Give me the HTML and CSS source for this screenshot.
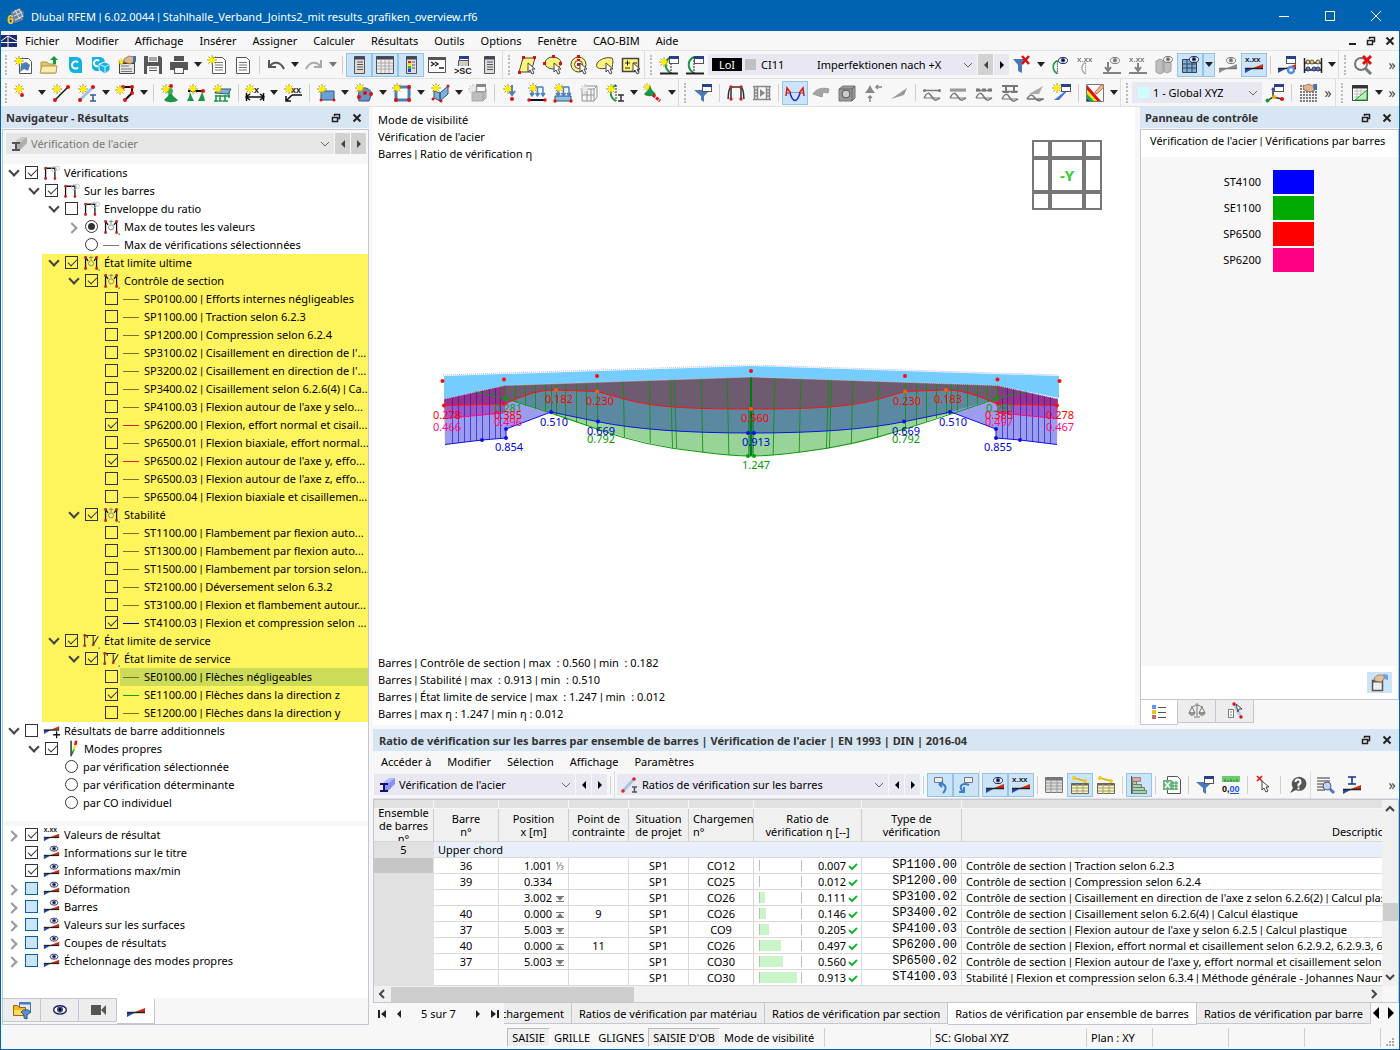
FILE: index.html
```html
<!DOCTYPE html>
<html lang="fr">
<head>
<meta charset="UTF-8">
<title>Dlubal RFEM</title>
<link rel="stylesheet" href="styles.css">
</head>
<body>

<!-- icons -->
<svg class="defs">
  <defs>
    <g id="star"><path d="M5 0v10M0 5h10M1.5 1.5l7 7M8.5 1.5l-7 7" stroke="#b99a00" fill="none"/><circle cx="5" cy="5" r="2.8" fill="#ffee00"/></g>
    <g id="eye"><ellipse cx="5" cy="3.5" rx="4.5" ry="3" fill="#fff" stroke="#1c2050"/><circle cx="5" cy="3.3" r="2.2" fill="#3a4f9a"/><circle cx="5" cy="3.3" r="1" fill="#000"/></g>
    <g id="win"><rect x=".5" y=".5" width="9" height="7" fill="#fff" stroke="#555"/><path d="M0 1.5h10" stroke="#2b3f8c" stroke-width="3"/></g>
    <g id="doc"><path d="M.5.5h10l3 3v13H.5z" fill="#fff" stroke="#555"/><path d="M3 5.5h8M3 8h8M3 10.5h8M3 13h8" stroke="#777"/></g>
    <g id="ramp"><path d="M0 9V4h9z" fill="#2449b0"/><path d="M8 4L18 0v4z" fill="#d42a10"/><path d="M0 4.5h18" stroke="#222" stroke-width="1.5"/></g>
    <g id="cur"><path d="M0 0v9l2-2 2 4 2-1-2-4h3z" fill="#fff" stroke="#444"/></g>
    <g id="wave"><path d="M1 4.5h16M1 12c3-6 5-6 8-1s5 3 8 1" fill="none" stroke="#777" stroke-width="1.5"/><path d="M1 12h16" stroke="#777"/></g>
    <g id="arc"><path d="M8 1C1 4 1 13 8 17" fill="none" stroke="#1b9a45" stroke-width="2"/><path d="M8 1v16" stroke="#222" stroke-dasharray="2 1"/></g>
  </defs>
  <symbol id="i-app" viewBox="0 0 20 20"><path d="M5 6l8-4 5 4-1 8-8 3-4-5z" fill="#6f8396"/><path d="M7 7l7-4M8 10l8-4M9 14l8-4M9 4l5 9M13 3l4 8" stroke="#dbe6ee"/><text x="1" y="18" class="six">6</text></symbol>
  <symbol id="i-rfem" viewBox="0 0 16 12"><path d="M0 0h16v12H0z" fill="#1d2b6f"/><path d="M0 6l7-5 9 5M0 7.5h16M7 1v11" fill="none" stroke="#fff"/></symbol>
  <symbol id="i-drop" viewBox="0 0 8 5"><path d="M0 0h8L4 5z" fill="#222"/></symbol>
  <symbol id="i-chev" viewBox="0 0 10 10"><path d="M1 3l4 4 4-4" fill="none" stroke="#666"/></symbol>
  <symbol id="i-prev" viewBox="0 0 10 10"><path d="M7 1v8L3 5z"/></symbol>
  <symbol id="i-next" viewBox="0 0 10 10"><path d="M3 1v8l4-4z"/></symbol>
  <symbol id="i-float" viewBox="0 0 10 10"><path d="M3.5 3V1.5h5v4H7M1.5 4.5h5v4h-5zM3 1.5h6M1 4.5h6" fill="none" stroke="#222" stroke-width="1.5"/></symbol>
  <symbol id="i-x" viewBox="0 0 10 10"><path d="M1.5 1.5l7 7M8.5 1.5l-7 7" stroke="#222" stroke-width="2"/></symbol>
  <symbol id="i-new" viewBox="0 0 20 20"><path d="M6.5 3.5h9l3 3v12h-12z" fill="#fff" stroke="#555"/><path d="M8 9l5-2 4 3-2 6-4-2-4 3z" fill="#4a7fb8"/><use href="#star" x="1" y="1"/></symbol>
  <symbol id="i-open" viewBox="0 0 20 20"><path d="M2 7h6l2 2h6v9H2z" fill="#dcc766" stroke="#b3964a"/><path d="M1 18l2-7h15l-1 7z" fill="#f8ecae" stroke="#b3964a"/><path d="M14 9V5h-3l4-4 4 4h-2v4z" fill="#149a3c"/></symbol>
  <symbol id="i-c" viewBox="0 0 20 20"><path d="M4 2h8a6 6 0 0 1 5 5v11H9a6 6 0 0 1-5-5z" fill="#11b2e2"/><path d="M13 7.5a3.5 3.5 0 1 0 0 5" fill="none" stroke="#fff" stroke-width="2"/></symbol>
  <symbol id="i-cc" viewBox="0 0 20 20"><path d="M1 2h8a6 6 0 0 1 5 5v9H5a5 5 0 0 1-4-4z" fill="#11b2e2"/><path d="M8 6a3 3 0 1 0-1 5" fill="none" stroke="#fff" stroke-width="2"/><path d="M14 7l5 2v6l-5 4-6-4V9z" fill="#11b2e2" stroke="#f7f7f7"/><path d="M8 9l6 3 5-3M14 12v7" stroke="#d8f4fc" fill="none"/></symbol>
  <symbol id="i-hand" viewBox="0 0 20 20"><path d="M2.5 6.5h15v12h-15z" fill="#e6e6e6" stroke="#444"/><path d="M3 8h14" stroke="#444" stroke-width="2"/><path d="M4 11h8M4 14h11M4 16.5h11" stroke="#777"/><path d="M7 4l5-3 5 1v5l-4 2-6-2z" fill="#e2b48c" stroke="#8a5a3a" stroke-width=".7"/><path d="M16 1h3v6h-3z" fill="#3f74b4"/><use href="#star" transform="scale(.7)" x="1" y="5"/></symbol>
  <symbol id="i-save" viewBox="0 0 20 20"><path d="M1 1h16l2 2v16H1z" fill="#565656"/><path d="M5 1h10v6H5zM4 11h12v8H4z" fill="#f7f7f7"/><path d="M6 3h8M6 5h8M6 13h8M6 15.5h8" stroke="#565656"/></symbol>
  <symbol id="i-print" viewBox="0 0 20 20"><path d="M5 1h10v5H5zM1 7h18v8H1zM5 12h10v7H5z" fill="#565656"/><path d="M6.5 13.5h7v4h-7zM4 6.5h12" fill="#f7f7f7" stroke="#f7f7f7"/></symbol>
  <symbol id="i-ndoc" viewBox="0 0 20 20"><use href="#doc" x="5" y="2"/><use href="#star"/></symbol>
  <symbol id="i-doc" viewBox="0 0 20 20"><use href="#doc" x="3" y="2"/></symbol>
  <symbol id="i-undo" viewBox="0 0 20 20"><path d="M3 5v7h7M3 12c4-6 11-6 15 2" fill="none" stroke="#555" stroke-width="2"/></symbol>
  <symbol id="i-redo" viewBox="0 0 20 20"><path d="M17 5v7h-7M17 12c-4-6-11-6-15 2" fill="none" stroke="#aaa" stroke-width="2"/></symbol>
  <symbol id="i-nav" viewBox="0 0 20 20"><path d="M5.5 1.5h10v17h-10z" fill="#ddd" stroke="#555"/><path d="M5 3h11" stroke="#445" stroke-width="3"/><path d="M8 7h6M8 9.5h6M8 12h6M8 14.5h6" stroke="#555"/></symbol>
  <symbol id="i-grid" viewBox="0 0 20 20"><path d="M1.5 1.5h17v17h-17z" fill="#eee" stroke="#555"/><path d="M1 3h18" stroke="#445" stroke-width="3"/><path d="M2 8h16M2 11h16M2 14h16M6 5v13M10 5v13M14 5v13" stroke="#aaa"/></symbol>
  <symbol id="i-scale" viewBox="0 0 20 20"><path d="M5.5 1.5h10v17h-10z" fill="#ddd" stroke="#555"/><path d="M5 3h11" stroke="#445" stroke-width="3"/><path d="M7 6h3v2H7z" fill="#d22"/><path d="M7 8h3v3H7z" fill="#fd0"/><path d="M7 11h3v3H7z" fill="#2b3"/><path d="M7 14h3v3H7z" fill="#24d"/><path d="M11 7h3M11 10h3M11 13h3" stroke="#555"/></symbol>
  <symbol id="i-cons" viewBox="0 0 20 20"><path d="M1.5 2.5h17v15h-17z" fill="#fff" stroke="#555"/><path d="M1 3.5h18" stroke="#555" stroke-width="3"/><path d="M4 7l3 2-3 2M8 7l3 2-3 2M12 13h5" fill="none" stroke="#222" stroke-width="1.5"/></symbol>
  <symbol id="i-sc" viewBox="0 0 20 20"><use href="#win" x="6" y="1"/><path d="M5.5 5.5h10v6h-10z" fill="#ccc" stroke="#555"/><path d="M0 11h20v8H0z" fill="#f7f7f7"/><text x="1" y="19" class="tiny big">&gt;SC</text></symbol>
  <symbol id="i-poly" viewBox="0 0 20 20"><path d="M2 17L6 3h12l-4 14z" fill="#fff37a" stroke="#444"/><path d="M1 16h3v3H1zM5 1h3v3H5zM16 1h3v3h-3z" fill="#d11"/><use href="#cur" x="11" y="8"/></symbol>
  <symbol id="i-ell" viewBox="0 0 20 20"><ellipse cx="10" cy="8" rx="8" ry="6" fill="#fff37a" stroke="#444"/><path d="M9 0h3v3H9zM0 7h3v3H0zM16 7h3v3h-3z" fill="#d11"/><use href="#cur" x="11" y="8"/></symbol>
  <symbol id="i-ring" viewBox="0 0 20 20"><circle cx="9.500" cy="9.500" r="7.500" fill="#fff37a" stroke="#444"/><circle cx="9.500" cy="9.500" r="4" fill="#fff" stroke="#444"/><path d="M8 0h3v3H8zM8 8h3v3H8zM8 4h3v2H8z" fill="#d11"/><use href="#cur" x="11" y="8"/></symbol>
  <symbol id="i-lasso" viewBox="0 0 20 20"><path d="M3 7c4-4 10-5 14-4 2 3 0 7 0 11l-5-1c-4 1-9 1-10-1-1-2 0-4 1-5z" fill="#fff37a" stroke="#444"/><use href="#cur" x="11" y="8"/></symbol>
  <symbol id="i-pm" viewBox="0 0 20 20"><path d="M1.5 3.5h16v13h-16z" fill="#fff37a" stroke="#444" stroke-width="1.5"/><path d="M4 8h5M6.5 5.5v5M4 13h5M12 8h4" stroke="#222"/><use href="#cur" x="12" y="8"/></symbol>
  <symbol id="i-lc" viewBox="0 0 20 20"><use href="#arc" x="4" y="1"/><use href="#win" x="10" y="1"/><path d="M1 18.5h18" stroke="#222" stroke-width="2"/><use href="#star" x="0" y="2"/></symbol>
  <symbol id="i-lc2" viewBox="0 0 20 20"><use href="#arc" x="1" y="1"/><use href="#win" x="9" y="1"/><path d="M1 18.5h18" stroke="#222" stroke-width="2"/></symbol>
  <symbol id="i-fx" viewBox="0 0 20 20"><path d="M1 4h14l-5 6v8l-4-2v-6z" fill="#4a78b8"/><path d="M10 1l7 8M17 1l-7 8" stroke="#e01010" stroke-width="2.5"/></symbol>
  <symbol id="i-arceye" viewBox="0 0 20 20"><use href="#arc" transform="translate(1 5) scale(.8)"/><use href="#eye" x="8" y="2"/></symbol>
  <symbol id="i-arcx" viewBox="0 0 20 20"><use href="#arc" transform="translate(4 7) scale(.7)"/><text x="1" y="7" class="tiny">x.xx</text></symbol>
  <symbol id="i-loadeye" viewBox="0 0 20 20"><path d="M1 18h18" stroke="#333" stroke-width="2"/><path d="M6 7v8M3 12l3 4 3-4" fill="none" stroke="#333" stroke-width="2"/><use href="#eye" x="8" y="2"/></symbol>
  <symbol id="i-loadx" viewBox="0 0 20 20"><path d="M1 18h18" stroke="#333" stroke-width="2"/><path d="M10 8v8M7 12l3 4 3-4" fill="none" stroke="#333" stroke-width="2"/><text x="1" y="7" class="tiny">x.xx</text></symbol>
  <symbol id="i-cube" viewBox="0 0 20 20"><path d="M2 6l4-2 4 2v11l-4 2-4-2zM9 5l4-2 4 2v11l-4 2-4-2z" fill="#999" stroke="#666"/><use href="#eye" x="9" y="1"/></symbol>
  <symbol id="i-mesh" viewBox="0 0 20 20"><path d="M2.5 4.5h14v13h-14z" fill="#7fadd8" stroke="#345"/><path d="M2 9h14M2 13h14M7 4v14M12 4v14" stroke="#345"/><use href="#eye" x="9" y="1"/></symbol>
  <symbol id="i-reye" viewBox="0 0 20 20"><use href="#ramp" x="1" y="9"/><use href="#eye" x="8" y="2"/></symbol>
  <symbol id="i-rx" viewBox="0 0 20 20"><use href="#ramp" x="1" y="9"/><text x="1" y="7" class="tiny">x.xx</text></symbol>
  <symbol id="i-rwin" viewBox="0 0 20 20"><use href="#ramp" x="1" y="9"/><use href="#win" x="9" y="1"/><circle cx="14" cy="15" r="3" fill="#fff" stroke="#5a8de0" stroke-width="2.5"/></symbol>
  <symbol id="i-abac" viewBox="0 0 20 20"><path d="M1.5 3v15M18.5 3v15M1 8h18M1 15h18" stroke="#222" stroke-width="1.5"/><g fill="#e8d46a" stroke="#555"><circle cx="5" cy="7" r="2"/><circle cx="9" cy="7" r="2"/><circle cx="15" cy="7" r="2"/></g><g fill="#5b7fd0" stroke="#335"><circle cx="5" cy="14" r="2"/><circle cx="11" cy="14" r="2"/><circle cx="15" cy="14" r="2"/></g></symbol>
  <symbol id="i-find" viewBox="0 0 20 20"><circle cx="8" cy="9" r="6" fill="none" stroke="#777" stroke-width="2"/><path d="M12 13l6 6" stroke="#777" stroke-width="3"/><path d="M10 1l8 8M18 1l-8 8" stroke="#e01010" stroke-width="3"/></symbol>
  <symbol id="i-node" viewBox="0 0 20 20"><use href="#star" x="1" y="1"/><circle cx="9" cy="12" r="2" fill="#e01010"/></symbol>
  <symbol id="i-line" viewBox="0 0 20 20"><path d="M4 17L17 4" stroke="#111" stroke-width="1.5"/><circle cx="4" cy="17" r="2" fill="#e01010"/><circle cx="17" cy="4" r="2" fill="#e01010"/><use href="#star" x="1" y="1"/></symbol>
  <symbol id="i-member" viewBox="0 0 20 20"><path d="M3 17L16 4" stroke="#9cc3e8" stroke-width="3"/><circle cx="3" cy="17" r="2" fill="#e01010"/><circle cx="16" cy="4" r="2" fill="#e01010"/><path d="M13 12h6M13 18h6M16 12v6" stroke="#3a5a90" stroke-width="1.5"/><use href="#star" x="1" y="1"/></symbol>
  <symbol id="i-mem" viewBox="0 0 20 20"><path d="M3 16L14 4" stroke="#a8c4e0" stroke-width="3"/><circle cx="3" cy="16" r="1.8" fill="#d22"/><circle cx="14" cy="4" r="1.8" fill="#d22"/><path d="M12 12h5M12 17h5M14.5 12v5" stroke="#555" stroke-width="1.5"/></symbol>
  <symbol id="i-pline" viewBox="0 0 20 20"><path d="M8 4h9v6l-7 7" fill="none" stroke="#111" stroke-width="2"/><g fill="#e01010"><circle cx="8" cy="4" r="2"/><circle cx="17" cy="4" r="2"/><circle cx="17" cy="10" r="2"/><circle cx="10" cy="17" r="2"/></g><use href="#star" x="0" y="2"/></symbol>
  <symbol id="i-sup" viewBox="0 0 20 20"><path d="M10 6l3 7 5 4c-3 3-11 3-14 0l4-4z" fill="#1d9446"/><circle cx="10" cy="8" r="3" fill="#35b05e"/><circle cx="11" cy="3" r="2" fill="#e01010"/><use href="#star" x="1" y="1"/></symbol>
  <symbol id="i-sup2" viewBox="0 0 20 20"><path d="M2 8h16" stroke="#111" stroke-width="2"/><path d="M4 9l2 5 2 4H1l2-4zM16 9l2 5 1 4h-7l2-4z" fill="#1d9446"/><circle cx="17" cy="8" r="2" fill="#e01010"/><use href="#star" x="2" y="1"/></symbol>
  <symbol id="i-sup3" viewBox="0 0 20 20"><path d="M3 10l3-4h13l-3 5z" fill="#7db0de" stroke="#357"/><path d="M4 12v6M8 12v6M13 12v6M17 9v6M2 18h4M6.5 18h4M11 18h5M3 13h15" stroke="#1d9446" stroke-width="1.5"/><use href="#star" x="1" y="1"/></symbol>
  <symbol id="i-dim" viewBox="0 0 20 20"><path d="M1.5 10v8M18.5 10v8M2 14h16M5 11l-4 3 4 3M15 11l4 3-4 3" fill="none" stroke="#111" stroke-width="1.5"/><text x="9" y="10" class="tiny big">x</text><use href="#star" x="0" y="1"/></symbol>
  <symbol id="i-dimx" viewBox="0 0 20 20"><path d="M9 12h10M9 12l-6 6M3 13v5h5" fill="none" stroke="#111" stroke-width="1.5"/><text x="8" y="10" class="tiny big">xx</text><use href="#star" x="1" y="1"/></symbol>
  <symbol id="i-surf" viewBox="0 0 20 20"><path d="M5 8h13v9H5z" fill="#6aa0d8" stroke="#357"/><circle cx="5" cy="17" r="1.5" fill="#e01010"/><circle cx="18" cy="17" r="1.5" fill="#e01010"/><use href="#star" x="1" y="1"/></symbol>
  <symbol id="i-surf2" viewBox="0 0 20 20"><path d="M5 7c5-4 10-2 13 3l-3 8H5c-2-4 0-7 0-11z" fill="#6a8fc0" stroke="#357"/><circle cx="5" cy="14" r="2" fill="#e01010"/><circle cx="11" cy="10" r="2" fill="#e01010"/><circle cx="17" cy="11" r="2" fill="#e01010"/><use href="#star" x="1" y="0"/></symbol>
  <symbol id="i-open2" viewBox="0 0 20 20"><path d="M4 4h13v13H4z" fill="#fff" stroke="#4680bb" stroke-width="3"/><circle cx="4" cy="17" r="2" fill="#e01010"/><circle cx="17" cy="17" r="2" fill="#e01010"/><circle cx="17" cy="4" r="2" fill="#e01010"/><use href="#star" x="0" y="0"/></symbol>
  <symbol id="i-solid" viewBox="0 0 20 20"><path d="M4 8l6 2v8l-6-3zM10 10l8-7v8l-8 7z" fill="#7db0de" stroke="#357"/><circle cx="3" cy="16" r="1.5" fill="#e01010"/><circle cx="11" cy="18" r="1.5" fill="#e01010"/><circle cx="18" cy="3" r="1.5" fill="#e01010"/><use href="#star" x="1" y="0"/></symbol>
  <symbol id="i-block" viewBox="0 0 20 20"><path d="M4 9l3-3h11l-3 3zM4 9h11v9H4zM15 9l3-3v9l-3 3z" fill="#999" stroke="#777"/><use href="#win" x="8" y="1"/><use href="#star" x="0" y="1"/></symbol>
  <symbol id="i-nload" viewBox="0 0 20 20"><path d="M11 2v10M8 8l3 4 3-4" fill="none" stroke="#4a80c8" stroke-width="2"/><circle cx="11" cy="16" r="2" fill="#e01010"/><use href="#star" x="2" y="1"/></symbol>
  <symbol id="i-mload" viewBox="0 0 20 20"><path d="M2 17h16" stroke="#111" stroke-width="2"/><path d="M5 4h11M5 4v8M10.5 4v8M16 4v8M3 10l2 3 2-3M8.5 10l2 3 2-3M14 10l2 3 2-3" fill="none" stroke="#4a80c8" stroke-width="1.5"/><circle cx="2" cy="17" r="1.7" fill="#e01010"/><circle cx="18" cy="17" r="1.7" fill="#e01010"/><use href="#star" x="1" y="0"/></symbol>
  <symbol id="i-sload" viewBox="0 0 20 20"><path d="M2 13h16v5H2z" fill="#8fc0e8" stroke="#357"/><path d="M5 4h11M5 4v8M10.5 4v8M16 4v8M3 10l2 3 2-3M8.5 10l2 3 2-3M14 10l2 3 2-3" fill="none" stroke="#4a80c8" stroke-width="1.5"/><circle cx="2" cy="18" r="1.7" fill="#e01010"/><circle cx="18" cy="18" r="1.7" fill="#e01010"/><use href="#star" x="1" y="0"/></symbol>
  <symbol id="i-vload" viewBox="0 0 20 20"><path d="M3 6l3-3h12v11l-3 4H3zM3 6h12v12M15 6l3-3M8 6v12M12 6v12M3 12h12" fill="none" stroke="#555"/><use href="#star" x="1" y="1"/></symbol>
  <symbol id="i-imp" viewBox="0 0 20 20"><use href="#arc" x="3" y="1"/><path d="M13 12h6M13 18h6M16 12v6" stroke="#333" stroke-width="1.5"/><use href="#star" x="1" y="1"/></symbol>
  <symbol id="i-copy" viewBox="0 0 20 20"><path d="M7 2l2 5 4 4c-2 3-10 3-12 0l4-4z" fill="#1d9446"/><path d="M10 12l7 6" stroke="#e01010" stroke-width="3" stroke-dasharray="3 1"/><use href="#star" transform="scale(.8)"/></symbol>
  <symbol id="i-filt" viewBox="0 0 20 20"><path d="M1 7h16l-6 6v6l-3-2v-4z" fill="#4a78b8"/><use href="#win" x="9" y="1"/></symbol>
  <symbol id="i-frame" viewBox="0 0 20 20"><path d="M2 16C3 9 2 6 5 4h10c3 2 2 5 3 12M5 17V4M15 17V4" fill="none" stroke="#333" stroke-width="1.5"/><g fill="#c22"><circle cx="5" cy="4" r="1.7"/><circle cx="15" cy="4" r="1.7"/><circle cx="5" cy="16" r="1.7"/><circle cx="15" cy="16" r="1.7"/></g></symbol>
  <symbol id="i-film" viewBox="0 0 20 20"><path d="M2.5 3v14M17.5 3v14M1 3.5h18M1 16.5h18M5.5 4v12M14.5 4v12M3 7h2M3 10h2M3 13h2M15 7h2M15 10h2M15 13h2" stroke="#888" stroke-width="1.5"/><path d="M8 6v8l5-4z" fill="#888"/></symbol>
  <symbol id="i-diag" viewBox="0 0 20 20"><path d="M1 10h18" stroke="#555"/><path d="M1 13L2 5l3 4 1 1M14 10l1-1 3-4 1 8" fill="none" stroke="#e01010" stroke-width="1.5"/><path d="M5 10c3 10 7 10 10 0" fill="#cfe0fa" stroke="#1528d8" stroke-width="1.5"/></symbol>
  <symbol id="i-shell" viewBox="0 0 20 20"><path d="M2 11c3-5 9-7 16-5l-1 4-5-1-1 5z" fill="#a5a5a5" stroke="#999"/></symbol>
  <symbol id="i-sol2" viewBox="0 0 20 20"><path d="M2 6l4-3h12v12l-3 3H2z" fill="#999" stroke="#777"/><circle cx="9" cy="11" r="4" fill="#ccc" stroke="#555"/><path d="M2 6h13v12M15 6l3-3" fill="none" stroke="#666"/></symbol>
  <symbol id="i-react" viewBox="0 0 20 20"><path d="M7 2l2 4 3 4H2l3-4z" fill="#888"/><path d="M7 19v-6M5 15l2-2 2 2M19 4h-6M15 2l-2 2 2 2" fill="none" stroke="#888" stroke-width="1.5"/></symbol>
  <symbol id="i-wing" viewBox="0 0 20 20"><path d="M2 16L18 5l-3 7z" fill="#999"/></symbol>
  <symbol id="i-w1" viewBox="0 0 20 20"><use href="#wave" x="1" y="3"/><circle cx="2.500" cy="7.500" r="1.5" fill="#777"/><circle cx="17.500" cy="7.500" r="1.5" fill="#777"/></symbol>
  <symbol id="i-w2" viewBox="0 0 20 20"><use href="#wave" x="1" y="3"/><path d="M2 7h16" stroke="#999" stroke-width="3"/></symbol>
  <symbol id="i-w3" viewBox="0 0 20 20"><use href="#wave" x="1" y="3"/><path d="M2 7h16" stroke="#777" stroke-width="3" stroke-dasharray="4 2"/></symbol>
  <symbol id="i-w4" viewBox="0 0 20 20"><use href="#wave" x="1" y="4"/><path d="M2 3h16M6 3v6M14 3v6M3 9h6M11 9h6" stroke="#777" stroke-width="2"/></symbol>
  <symbol id="i-w5" viewBox="0 0 20 20"><path d="M3 11L17 3l-4 8z" fill="#aaa"/><path d="M1 16c3-5 5-5 8-1s5 3 8 1M1 16h17" fill="none" stroke="#777" stroke-width="1.5"/></symbol>
  <symbol id="i-w6" viewBox="0 0 20 20"><path d="M2 17h5L18 5l-6 4z" fill="#4a70d8"/><use href="#win" x="9" y="1"/><use href="#star" x="0" y="0"/></symbol>
  <symbol id="i-rain" viewBox="0 0 20 20"><path d="M1.5 1.5h17v17h-17z" fill="#fff" stroke="#777"/><path d="M2 2l14 16h-4L2 7z" fill="#e01010"/><path d="M2 7l10 11H9L2 11z" fill="#ffe000"/><path d="M2 11l7 7H5l-3-3z" fill="#15b030"/><path d="M2 15l3 3H2z" fill="#1528d8"/><path d="M10 9l6-7 3 2-6 6-3 1z" fill="#f0b878" stroke="#b77"/></symbol>
  <symbol id="i-axes" viewBox="0 0 20 20"><path d="M8 14V5M8 14l9 2M8 14l-6 4" stroke="#333" stroke-width="1.5"/><path d="M8 4l2 3H6z" fill="#24d"/><circle cx="17" cy="16" r="2" fill="#e01010"/><circle cx="2.500" cy="17.500" r="2" fill="#1a9a30"/><circle cx="9" cy="14" r="2" fill="#e8b000"/><use href="#win" x="9" y="1"/></symbol>
  <symbol id="i-gh" viewBox="0 0 20 20"><path d="M2 9h17M2 12h17M2 15h17M2 18h17M2 3h4M2 6h4" stroke="#555" stroke-width="1.5" stroke-dasharray="2 1"/><path d="M5 3l6-2 4 2 2 4-5 2-6-2z" fill="#e2b48c" stroke="#8a5a3a" stroke-width=".7"/><path d="M15 1h4v6h-3z" fill="#3f74b4"/></symbol>
  <symbol id="i-tri" viewBox="0 0 20 20"><path d="M2.5 2.5h15v15h-15z" fill="#fff" stroke="#444"/><path d="M2 4h16" stroke="#333" stroke-width="3"/><path d="M4 8h12M4 11h12M4 14h12M7 6v11M11 6v11" stroke="#bbb"/><path d="M5 17L17 7v10z" fill="#b8efb8" stroke="#1a9a30"/></symbol>
  <symbol id="i-steel" viewBox="0 0 20 20"><path d="M7 7l6-4h5v6l-7 7H8z" fill="#8a92ee"/><path d="M13 3h5l-6 5H6z" fill="#b4baff"/><path d="M3 9h8M3 16h8M7 9v7" stroke="#10107a" stroke-width="2"/></symbol>
  <symbol id="i-synl" viewBox="0 0 20 20"><path d="M4.5 2.5h8v5h-8z" fill="#eee" stroke="#777"/><path d="M9 9l4-2M9 9l3 3M9 9c6-1 9 4 4 9" fill="none" stroke="#3b7fc4" stroke-width="2"/></symbol>
  <symbol id="i-synr" viewBox="0 0 20 20"><path d="M8.5 2.5h8v5h-8z" fill="#eee" stroke="#777"/><path d="M13 10C6 7 2 11 7 17M8 12v5H3" fill="none" stroke="#3b7fc4" stroke-width="2"/></symbol>
  <symbol id="i-tab" viewBox="0 0 20 20"><path d="M1.5 2.5h17v15h-17z" fill="#ddd" stroke="#777"/><path d="M1 4h18" stroke="#777" stroke-width="3"/><path d="M2 8h16M2 11h16M2 14h16M7 5v13M13 5v13" stroke="#999"/></symbol>
  <symbol id="i-ytab" viewBox="0 0 20 20"><path d="M1.5 8.5h17v10h-17z" fill="#fff6a0" stroke="#666"/><path d="M1 9.5h18" stroke="#666" stroke-width="2"/><path d="M2 13h16M2 16h16M7 9v10M13 9v10" stroke="#999"/><path d="M4 3l11 3" stroke="#d8b000" stroke-width="1.5"/><circle cx="4" cy="3" r="2" fill="#f4cc10"/><circle cx="15" cy="6" r="2" fill="#f4cc10"/></symbol>
  <symbol id="i-bars" viewBox="0 0 20 20"><path d="M2.5 1v18" stroke="#555"/><path d="M3.5 2.5h8v4h-8z" fill="#f0a0a0" stroke="#888"/><path d="M3.5 6.5h4v3h-4zM3.5 9.5h9v3h-9zM3.5 15.5h14v3h-14zM3.5 12.5h12v3h-12z" fill="#9fd8a8" stroke="#777"/></symbol>
  <symbol id="i-xls" viewBox="0 0 20 20"><path d="M5.5 1.5h10l3 3v14h-13z" fill="#fff" stroke="#555"/><path d="M8 8h8M8 11h8M8 14h8M11 6v9M14 6v9" stroke="#2b9a4b"/><path d="M1 5h9v10H1z" fill="#6fb07f"/><path d="M3 7l5 6M8 7l-5 6" stroke="#fff" stroke-width="1.5"/></symbol>
  <symbol id="i-dec" viewBox="0 0 20 20"><path d="M1 1h18v6H1z" fill="#6ccb6c"/><path d="M4 4v3M7 5v2M10 4v3M13 5v2M16 4v3" stroke="#287a28"/><text x="1" y="17" class="dec">0,<tspan fill="#2050e0">00</tspan></text><path d="M9 18.5h9" stroke="#2050e0"/></symbol>
  <symbol id="i-curx" viewBox="0 0 20 20"><path d="M3 1l5 5M8 1L3 6" stroke="#e01010" stroke-width="1.5"/><use href="#cur" x="8" y="6"/></symbol>
  <symbol id="i-help" viewBox="0 0 20 20"><path d="M11 2a7 7 0 1 1-2 13l-6 3 3-5A7 7 0 0 1 11 2z" fill="#555"/><path d="M8.5 7a2.5 2.5 0 1 1 3 2.5v2M11.5 12.5v2" fill="none" stroke="#fff" stroke-width="2"/></symbol>
  <symbol id="i-look" viewBox="0 0 20 20"><path d="M1 3h13M1 6h13M1 9h6M1 12h6M1 15h8" stroke="#777" stroke-width="1.5"/><circle cx="11" cy="11" r="4" fill="#bcd6f4" stroke="#557"/><path d="M14 14l4 4" stroke="#4a78c8" stroke-width="3"/></symbol>
  <symbol id="i-iramp" viewBox="0 0 20 20"><use href="#ramp" x="1" y="10"/><path d="M6 2h8M6 9h8M10 2v7" stroke="#10308a" stroke-width="1.5"/></symbol>
  <symbol id="i-ramp" viewBox="0 0 20 20"><use href="#ramp" x="1" y="7"/></symbol>
  <symbol id="i-rplus" viewBox="0 0 20 20"><use href="#ramp" x="1" y="5"/><path d="M16 11v8M12 15h8" stroke="#111" stroke-width="1.5"/></symbol>
  <symbol id="i-mode" viewBox="0 0 20 20"><path d="M9.5 1v18" stroke="#111" stroke-width="1.5"/><path d="M14 1h3l-1 5h-3z" fill="#e01010"/><path d="M13 6h3l-2 5h-2z" fill="#ffe000"/><path d="M12 11h2l-2 5-2-1z" fill="#15b030"/><path d="M10 15h2l-2 4z" fill="#1528d8"/></symbol>
  <symbol id="i-t1" viewBox="0 0 20 20"><path d="M3 18V5h11v13" fill="none" stroke="#111" stroke-width="1.5"/><path d="M2 4h2v2H2zM2 16h2v2H2zM13 16h2v2h-2z" stroke="#c22" fill="#c22"/><circle cx="13" cy="6" r="3" fill="none" stroke="#bbb"/><circle cx="17" cy="5" r="2.5" fill="none" stroke="#bbb"/></symbol>
  <symbol id="i-t2" viewBox="0 0 20 20"><path d="M3 18V4M16 18V4M3 4l3 4M16 4l-3 4" fill="none" stroke="#111" stroke-width="1.5"/><path d="M2 3h2v2H2zM15 3h2v2h-2zM2 16h2v2H2zM15 16h2v2h-2z" stroke="#c22" fill="#c22"/><circle cx="9.500" cy="11" r="3" fill="none" stroke="#777"/><path d="M7 4h5M9.5 2v5" stroke="#777"/><path d="M18 18h2v2h-2z" fill="#6b6"/></symbol>
  <symbol id="i-t3" viewBox="0 0 20 20"><path d="M2 17V4h13M12 15V5M12 15l6-10M5 4v3" fill="none" stroke="#222" stroke-width="1.2"/><path d="M1 3h2v2H1zM1 15h2v2H1zM11 14h2v2h-2z" stroke="#c22" fill="#c22"/><path d="M18 18h2v2h-2z" fill="#6b6"/></symbol>
  <symbol id="i-proj" viewBox="0 0 20 20"><path d="M7.5 2.5h11v9h-11z" fill="#dce8f8" stroke="#4a78c8"/><path d="M7 3.5h12" stroke="#4a78c8" stroke-width="2"/><path d="M1.5 5.5h4l2 2h6v8h-12z" fill="#f4b820" stroke="#97680a"/><path d="M2 10h11v5H2z" fill="#ffdc60"/><path d="M9 12c3-3 7-3 10 0l-4 3v4l-3-1v-3z" fill="#5a90d0" stroke="#357"/></symbol>
  <symbol id="i-eye" viewBox="0 0 20 20"><use href="#eye" transform="translate(3 5) scale(1.4)"/></symbol>
  <symbol id="i-cam" viewBox="0 0 20 20"><path d="M3 5h10v10H3zM13 10l5-5v10z" fill="#555"/></symbol>
  <symbol id="i-list" viewBox="0 0 20 20"><path d="M3 3h4v4H3z" fill="#5b95ff"/><path d="M3 8h4v4H3z" fill="#f4c400"/><path d="M3 13h4v4H3z" fill="#c06a6a"/><path d="M9 5.5h8M9 10.5h8M9 15.5h8" stroke="#555"/></symbol>
  <symbol id="i-bal" viewBox="0 0 20 20"><path d="M10 2v13M7 16h6M4 6c3 0 3-2 6-2s3 2 6 2M2 12l3-6 3 6zM12 12l3-6 3 6z" fill="none" stroke="#777"/><path d="M2 12c1 3 5 3 6 0zM12 12c1 3 5 3 6 0z" fill="#aaa" stroke="#777"/></symbol>
  <symbol id="i-fac" viewBox="0 0 20 20"><path d="M9 3l7 13" stroke="#b8c8e8" stroke-width="3"/><path d="M3.5 8.5h5v8h-5zM5 11h2M5 14h2" fill="#fff" stroke="#777"/><circle cx="9" cy="3" r="1.7" fill="#d11"/><circle cx="16" cy="16" r="1.7" fill="#d11"/><path d="M11 3l6 5h-3l-1 3z" fill="#fff" stroke="#444"/></symbol>
  <symbol id="i-panel" viewBox="0 0 20 20"><path d="M2.5 7.5h10v10h-10z" fill="#eee" stroke="#555" stroke-width="1.5"/><path d="M2 8.5h11" stroke="#555" stroke-width="2"/><path d="M4 5l4-3h6v4l-3 3-6-1z" fill="#e0c0a0" stroke="#8a6a4a" stroke-width=".7"/><path d="M14 1l4 1v5l-4-1z" fill="#6f9fe0"/></symbol>
  <symbol id="i-dn" viewBox="0 0 8 8"><path d="M0 1.5h8M0 6.5h8" stroke="#777"/><path d="M1 2h6L4 6z" fill="#777"/></symbol>
  <symbol id="i-up" viewBox="0 0 8 8"><path d="M0 1.5h8M0 6.5h8" stroke="#777"/><path d="M1 6h6L4 2z" fill="#777"/></symbol>
  <symbol id="i-ok" viewBox="0 0 10 10"><path d="M1 5l3 3 5-5" fill="none" stroke="#22b03a" stroke-width="2"/></symbol>
</svg>

<div class="window">
  <header class="title">
    <svg class="ic"><use href="#i-app"/></svg>
    <span>Dlubal RFEM <em>|</em> 6.02.0044 <em>|</em> Stahlhalle_Verband_Joints2_mit results_grafiken_overview.rf6</span>
    <div class="winbtns">
      <button title="Réduire"><svg viewBox="0 0 12 12"><path d="M1 6.5h10"/></svg></button>
      <button title="Agrandir"><svg viewBox="0 0 12 12"><path d="M1.5 1.5h9v9h-9z"/></svg></button>
      <button title="Fermer"><svg viewBox="0 0 12 12"><path d="M1 1l10 10M11 1L1 11"/></svg></button>
    </div>
  </header>

  <nav class="menu main-menu">
    <svg class="logo"><use href="#i-rfem"/></svg>
    <button>Fichier</button><button>Modifier</button><button>Affichage</button><button>Insérer</button><button>Assigner</button><button>Calculer</button><button>Résultats</button><button>Outils</button><button>Options</button><button>Fenêtre</button><button>CAO-BIM</button><button>Aide</button>
    <div class="mdi">
      <button title="Réduire"><svg class="s" viewBox="0 0 10 10"><path d="M2 8h7" stroke="#222" stroke-width="2"/></svg></button>
      <button title="Restaurer"><svg class="s"><use href="#i-float"/></svg></button>
      <button title="Fermer"><svg class="s"><use href="#i-x"/></svg></button>
    </div>
  </nav>

  <div class="toolbar">
    <i class="grip"></i>
    <button><svg class="ic"><use href="#i-new"/></svg></button>
    <button><svg class="ic"><use href="#i-open"/></svg></button>
    <button><svg class="ic"><use href="#i-c"/></svg></button>
    <button><svg class="ic"><use href="#i-cc"/></svg></button>
    <button><svg class="ic"><use href="#i-hand"/></svg></button>
    <button><svg class="ic"><use href="#i-save"/></svg></button>
    <button><svg class="ic"><use href="#i-print"/></svg></button>
    <button class="drop"><svg><use href="#i-drop"/></svg></button>
    <button><svg class="ic"><use href="#i-ndoc"/></svg></button>
    <button><svg class="ic"><use href="#i-doc"/></svg></button>
    <i class="sep"></i>
    <button><svg class="ic"><use href="#i-undo"/></svg></button>
    <button class="drop"><svg><use href="#i-drop"/></svg></button>
    <button><svg class="ic"><use href="#i-redo"/></svg></button>
    <button class="drop off"><svg><use href="#i-drop"/></svg></button>
    <i class="sep"></i>
    <button class="on"><svg class="ic"><use href="#i-nav"/></svg></button>
    <button class="on"><svg class="ic"><use href="#i-grid"/></svg></button>
    <button class="on"><svg class="ic"><use href="#i-scale"/></svg></button>
    <button><svg class="ic"><use href="#i-cons"/></svg></button>
    <button><svg class="ic"><use href="#i-sc"/></svg></button>
    <button><svg class="ic"><use href="#i-nav"/></svg></button>
    <i class="brk"></i>
    <button><svg class="ic"><use href="#i-poly"/></svg></button>
    <button><svg class="ic"><use href="#i-ell"/></svg></button>
    <button><svg class="ic"><use href="#i-ring"/></svg></button>
    <button><svg class="ic"><use href="#i-lasso"/></svg></button>
    <button><svg class="ic"><use href="#i-pm"/></svg></button>
    <i class="brk"></i>
    <button><svg class="ic"><use href="#i-lc"/></svg></button>
    <button><svg class="ic"><use href="#i-lc2"/></svg></button>
    <div class="combo combo-load">
      <span class="chip">LoI</span><i class="sw"></i><span class="ci">CI11</span>
      <select aria-label="Cas de charge"><option>Imperfektionen nach +X</option></select>
      <svg class="s"><use href="#i-chev"/></svg>
    </div>
    <button class="step dis"><svg class="s"><use href="#i-prev"/></svg></button>
    <button class="step"><svg class="s"><use href="#i-next"/></svg></button>
    <button><svg class="ic"><use href="#i-fx"/></svg></button>
    <button class="drop"><svg><use href="#i-drop"/></svg></button>
    <button><svg class="ic"><use href="#i-arceye"/></svg></button>
    <button class="off"><svg class="ic"><use href="#i-arcx"/></svg></button>
    <button class="off"><svg class="ic"><use href="#i-loadeye"/></svg></button>
    <button class="off"><svg class="ic"><use href="#i-loadx"/></svg></button>
    <button class="off"><svg class="ic"><use href="#i-cube"/></svg></button>
    <button class="on"><svg class="ic"><use href="#i-mesh"/></svg></button>
    <button class="drop on"><svg><use href="#i-drop"/></svg></button>
    <button class="off"><svg class="ic"><use href="#i-reye"/></svg></button>
    <button class="on"><svg class="ic"><use href="#i-rx"/></svg></button>
    <i class="sep"></i>
    <button><svg class="ic"><use href="#i-rwin"/></svg></button>
    <button><svg class="ic"><use href="#i-abac"/></svg></button>
    <button class="drop"><svg><use href="#i-drop"/></svg></button>
    <i class="brk"></i>
    <button><svg class="ic"><use href="#i-find"/></svg></button>
    <button class="more last">»</button>
  </div>

  <div class="toolbar">
    <i class="grip"></i>
    <button><svg class="ic"><use href="#i-node"/></svg></button>
    <button class="drop"><svg><use href="#i-drop"/></svg></button>
    <button><svg class="ic"><use href="#i-line"/></svg></button>
    <button><svg class="ic"><use href="#i-member"/></svg></button>
    <button class="drop"><svg><use href="#i-drop"/></svg></button>
    <button><svg class="ic"><use href="#i-pline"/></svg></button>
    <button class="drop"><svg><use href="#i-drop"/></svg></button>
    <i class="sep"></i>
    <button><svg class="ic"><use href="#i-sup"/></svg></button>
    <button><svg class="ic"><use href="#i-sup2"/></svg></button>
    <button><svg class="ic"><use href="#i-sup3"/></svg></button>
    <i class="sep"></i>
    <button><svg class="ic"><use href="#i-dim"/></svg></button>
    <button class="drop"><svg><use href="#i-drop"/></svg></button>
    <button><svg class="ic"><use href="#i-dimx"/></svg></button>
    <i class="sep"></i>
    <button><svg class="ic"><use href="#i-surf"/></svg></button>
    <button class="drop"><svg><use href="#i-drop"/></svg></button>
    <button><svg class="ic"><use href="#i-surf2"/></svg></button>
    <button class="drop"><svg><use href="#i-drop"/></svg></button>
    <button><svg class="ic"><use href="#i-open2"/></svg></button>
    <button class="drop"><svg><use href="#i-drop"/></svg></button>
    <button><svg class="ic"><use href="#i-solid"/></svg></button>
    <button class="drop"><svg><use href="#i-drop"/></svg></button>
    <button class="off"><svg class="ic"><use href="#i-block"/></svg></button>
    <i class="sep"></i>
    <button><svg class="ic"><use href="#i-nload"/></svg></button>
    <button><svg class="ic"><use href="#i-mload"/></svg></button>
    <button><svg class="ic"><use href="#i-sload"/></svg></button>
    <button class="off"><svg class="ic"><use href="#i-vload"/></svg></button>
    <button><svg class="ic"><use href="#i-imp"/></svg></button>
    <button class="drop"><svg><use href="#i-drop"/></svg></button>
    <button><svg class="ic"><use href="#i-copy"/></svg></button>
    <button class="drop"><svg><use href="#i-drop"/></svg></button>
    <i class="brk"></i>
    <button><svg class="ic"><use href="#i-filt"/></svg></button>
    <i class="sep"></i>
    <button><svg class="ic"><use href="#i-frame"/></svg></button>
    <button><svg class="ic"><use href="#i-film"/></svg></button>
    <i class="sep"></i>
    <button class="on"><svg class="ic"><use href="#i-diag"/></svg></button>
    <button><svg class="ic"><use href="#i-shell"/></svg></button>
    <button><svg class="ic"><use href="#i-sol2"/></svg></button>
    <button><svg class="ic"><use href="#i-react"/></svg></button>
    <button><svg class="ic"><use href="#i-wing"/></svg></button>
    <i class="sep"></i>
    <button><svg class="ic"><use href="#i-w1"/></svg></button>
    <button><svg class="ic"><use href="#i-w2"/></svg></button>
    <button><svg class="ic"><use href="#i-w3"/></svg></button>
    <button><svg class="ic"><use href="#i-w4"/></svg></button>
    <button><svg class="ic"><use href="#i-w5"/></svg></button>
    <button><svg class="ic"><use href="#i-w6"/></svg></button>
    <i class="sep"></i>
    <button><svg class="ic"><use href="#i-rain"/></svg></button>
    <button class="drop"><svg><use href="#i-drop"/></svg></button>
    <i class="brk"></i>
    <div class="combo combo-cs">
      <i class="sw cyan"></i>
      <select aria-label="Système de coordonnées"><option>1 - Global XYZ</option></select>
      <svg class="s"><use href="#i-chev"/></svg>
    </div>
    <button><svg class="ic"><use href="#i-axes"/></svg></button>
    <i class="sep"></i>
    <button><svg class="ic"><use href="#i-gh"/></svg></button>
    <button class="more">»</button>
    <i class="brk"></i>
    <button><svg class="ic"><use href="#i-tri"/></svg></button>
    <button class="drop"><svg><use href="#i-drop"/></svg></button>
    <button class="more last">»</button>
  </div>

  <main>
    <aside class="navigator">
      <h2>Navigateur - Résultats <button title="Détacher"><svg class="s"><use href="#i-float"/></svg></button><button title="Fermer"><svg class="s"><use href="#i-x"/></svg></button></h2>
      <div class="box">
        <div class="pick">
          <div class="combo dis"><svg class="ic gray"><use href="#i-steel"/></svg><select aria-label="Module" disabled><option>Vérification de l'acier</option></select><svg class="s"><use href="#i-chev"/></svg></div>
          <button class="step dis"><svg class="s"><use href="#i-prev"/></svg></button>
          <button class="step dis"><svg class="s"><use href="#i-next"/></svg></button>
        </div>
        <ul class="tree">
          <li><label><i class="open"></i><input type="checkbox" checked><span><svg><use href="#i-t1"/></svg>Vérifications</span></label>
            <ul>
              <li><label><i class="open"></i><input type="checkbox" checked><span><svg><use href="#i-t1"/></svg>Sur les barres</span></label>
                <ul>
                  <li><label><i class="open"></i><input type="checkbox"><span><svg><use href="#i-t1"/></svg>Enveloppe du ratio</span></label>
                    <ul>
                      <li><label><i class="shut"></i><input type="radio" name="env" checked><span><svg><use href="#i-t2"/></svg>Max de toutes les valeurs</span></label></li>
                      <li><label><i></i><input type="radio" name="env"><span><b></b>Max de vérifications sélectionnées</span></label></li>
                    </ul>
                  </li>
                </ul>
                <ul class="mark">
                  <li><label><i class="open"></i><input type="checkbox" checked><span><svg><use href="#i-t2"/></svg>État limite ultime</span></label>
                    <ul>
                      <li><label><i class="open"></i><input type="checkbox" checked><span><svg><use href="#i-t2"/></svg>Contrôle de section</span></label>
                        <ul>
                          <li><label><i></i><input type="checkbox"><span><b></b>SP0100.00 <em>|</em> Efforts internes négligeables</span></label></li>
                          <li><label><i></i><input type="checkbox"><span><b></b>SP1100.00 <em>|</em> Traction selon 6.2.3</span></label></li>
                          <li><label><i></i><input type="checkbox"><span><b></b>SP1200.00 <em>|</em> Compression selon 6.2.4</span></label></li>
                          <li><label><i></i><input type="checkbox"><span><b></b>SP3100.02 <em>|</em> Cisaillement en direction de l'...</span></label></li>
                          <li><label><i></i><input type="checkbox"><span><b></b>SP3200.02 <em>|</em> Cisaillement en direction de l'...</span></label></li>
                          <li><label><i></i><input type="checkbox"><span><b></b>SP3400.02 <em>|</em> Cisaillement selon 6.2.6(4) <em>|</em> Ca...</span></label></li>
                          <li><label><i></i><input type="checkbox"><span><b></b>SP4100.03 <em>|</em> Flexion autour de l'axe y selo...</span></label></li>
                          <li><label><i></i><input type="checkbox" checked><span><b class="pink"></b>SP6200.00 <em>|</em> Flexion, effort normal et cisail...</span></label></li>
                          <li><label><i></i><input type="checkbox"><span><b></b>SP6500.01 <em>|</em> Flexion biaxiale, effort normal...</span></label></li>
                          <li><label><i></i><input type="checkbox" checked><span><b class="red"></b>SP6500.02 <em>|</em> Flexion autour de l'axe y, effo...</span></label></li>
                          <li><label><i></i><input type="checkbox"><span><b></b>SP6500.03 <em>|</em> Flexion autour de l'axe z, effo...</span></label></li>
                          <li><label><i></i><input type="checkbox"><span><b></b>SP6500.04 <em>|</em> Flexion biaxiale et cisaillemen...</span></label></li>
                        </ul>
                      </li>
                      <li><label><i class="open"></i><input type="checkbox" checked><span><svg><use href="#i-t2"/></svg>Stabilité</span></label>
                        <ul>
                          <li><label><i></i><input type="checkbox"><span><b></b>ST1100.00 <em>|</em> Flambement par flexion auto...</span></label></li>
                          <li><label><i></i><input type="checkbox"><span><b></b>ST1300.00 <em>|</em> Flambement par flexion auto...</span></label></li>
                          <li><label><i></i><input type="checkbox"><span><b></b>ST1500.00 <em>|</em> Flambement par torsion selon...</span></label></li>
                          <li><label><i></i><input type="checkbox"><span><b></b>ST2100.00 <em>|</em> Déversement selon 6.3.2</span></label></li>
                          <li><label><i></i><input type="checkbox"><span><b></b>ST3100.00 <em>|</em> Flexion et flambement autour...</span></label></li>
                          <li><label><i></i><input type="checkbox" checked><span><b class="blue"></b>ST4100.03 <em>|</em> Flexion et compression selon ...</span></label></li>
                        </ul>
                      </li>
                    </ul>
                  </li>
                  <li><label><i class="open"></i><input type="checkbox" checked><span><svg><use href="#i-t3"/></svg>État limite de service</span></label>
                    <ul>
                      <li><label><i class="open"></i><input type="checkbox" checked><span><svg><use href="#i-t3"/></svg>État limite de service</span></label>
                        <ul>
                          <li><label class="sel"><i></i><input type="checkbox"><span><b></b>SE0100.00 <em>|</em> Flèches négligeables</span></label></li>
                          <li><label><i></i><input type="checkbox" checked><span><b class="green"></b>SE1100.00 <em>|</em> Flèches dans la direction z</span></label></li>
                          <li><label><i></i><input type="checkbox"><span><b></b>SE1200.00 <em>|</em> Flèches dans la direction y</span></label></li>
                        </ul>
                      </li>
                    </ul>
                  </li>
                </ul>
              </li>
            </ul>
          </li>
          <li><label><i class="open"></i><input type="checkbox"><span><svg><use href="#i-rplus"/></svg>Résultats de barre additionnels</span></label>
            <ul>
              <li><label><i class="open"></i><input type="checkbox" checked><span><svg><use href="#i-mode"/></svg>Modes propres</span></label>
                <ul>
                  <li><label><i></i><input type="radio" name="mode"><span>par vérification sélectionnée</span></label></li>
                  <li><label><i></i><input type="radio" name="mode"><span>par vérification déterminante</span></label></li>
                  <li><label><i></i><input type="radio" name="mode"><span>par CO individuel</span></label></li>
                </ul>
              </li>
            </ul>
          </li>
        </ul>
        <ul class="tree options">
          <li><label><i class="shut"></i><input type="checkbox" checked><span><svg><use href="#i-rx"/></svg>Valeurs de résultat</span></label></li>
          <li><label><i></i><input type="checkbox" checked><span><svg><use href="#i-reye"/></svg>Informations sur le titre</span></label></li>
          <li><label><i></i><input type="checkbox" checked><span><svg><use href="#i-reye"/></svg>Informations max/min</span></label></li>
          <li><label><i class="shut"></i><input type="checkbox" class="part"><span><svg><use href="#i-reye"/></svg>Déformation</span></label></li>
          <li><label><i class="shut"></i><input type="checkbox" class="part"><span><svg><use href="#i-reye"/></svg>Barres</span></label></li>
          <li><label><i class="shut"></i><input type="checkbox" class="part"><span><svg><use href="#i-reye"/></svg>Valeurs sur les surfaces</span></label></li>
          <li><label><i class="shut"></i><input type="checkbox" class="part"><span><svg><use href="#i-reye"/></svg>Coupes de résultats</span></label></li>
          <li><label><i class="shut"></i><input type="checkbox" class="part"><span><svg><use href="#i-reye"/></svg>Échelonnage des modes propres</span></label></li>
        </ul>
        <div class="tabs">
          <button title="Données"><svg class="ic"><use href="#i-proj"/></svg></button>
          <button title="Affichage"><svg class="ic"><use href="#i-eye"/></svg></button>
          <button title="Vues"><svg class="ic"><use href="#i-cam"/></svg></button>
          <button title="Résultats" class="cur"><svg class="ic"><use href="#i-ramp"/></svg></button>
        </div>
      </div>
    </aside>

    <div class="center">
      <div class="upper">
        <section class="view">
          <div class="info"><p>Mode de visibilité</p><p>Vérification de l'acier</p><p>Barres <em>|</em> Ratio de vérification η</p></div>
          <svg class="model" viewBox="425 350 660 130">
            <defs>
              <clipPath id="cg"><path id="pg" d="M475 392L505 385.5 751 377 997 385.5 1027 392 997 398.5Q951 412 905 429T801 452Q770 456 751 456T701 452Q650 446 597 429T505 398.5z"/></clipPath>
              <clipPath id="cb"><path d="M444 399L505 385.5 506 438 482 440 445 444.5zM1058 399L997 385.5 996 438 1020 440 1057 444.5z"/></clipPath>
            </defs>
            <path d="M443 375L751 365 1059 375" fill="none" stroke="#b9b9e8" stroke-dasharray="1 1"/>
            <path d="M444 376L751 366 1059 376V398L997 385.5 751 377 505 385.5 444 399z" fill="#75ccff"/>
            <use href="#pg" fill="#98d498"/>
            <path d="M444 399L505 385.5 556 384 551 412 506 429V438L482 440 445 444.5zM1058 399L997 385.5 946 384 951 412 996 429V438L1020 440 1057 444.5z" fill="#9d9df0"/>
            <path d="M475 392L505 385.5 751 377 997 385.5 1027 392 997 398.5 951 412 905 421.5Q850 433 751 433T597 421.5L551 412 505 398.5z" fill="#5c89a2"/>
            <path d="M444 399L505 385.5 505 413 445 418.5zM1058 399L997 385.5 997 413 1057 418.5z" fill="#a256c4"/>
            <path d="M444 399L505 385.5 505 404 445 405.5zM1058 399L997 385.5 997 404 1057 405.5z" fill="#9a3088"/>
            <path d="M505 385.5L751 377 997 385.5V404Q960 389 946 390L905 391.5C860 404 850 409 751 409S640 404 597 391.5L556 390Q535 389 505 404z" fill="#6e5b70"/>
            <path clip-path="url(#cb)" d="M452.5 380v70M458.5 380v70M464.5 380v70M470.5 380v70M476.5 380v70M482.5 380v70M489.5 380v70M495.5 380v70M500.5 380v70M1050.5 380v70M1044.5 380v70M1038.5 380v70M1032.5 380v70M1026.5 380v70M1020.5 380v70M1013.5 380v70M1007.5 380v70M1002.5 380v70" stroke="#1c1ccc" stroke-opacity=".7"/>
            <path clip-path="url(#cg)" d="M492.5 370v90M500.5 370v90M505.5 370v90M515.5 370v90M525.5 370v90M535.5 370v90M545.5 370v90M551.5 370v90M556.5 370v90M565.5 370v90M576.5 370v90M586.5 370v90M597.5 370v90M623 370l2 90M649.5 370l1 90M670 370l3 90M674 370l3 90M701 370l2 90M727 370l2 90M775 370l-2 90M801 370l-2 90M829 370l-3 90M832 370l-3 90M853 370l-2 90M879 370l-2 90M905.5 370v90M916.5 370v90M926.5 370v90M936.5 370v90M946.5 370v90M951.5 370v90M957.5 370v90M967.5 370v90M977.5 370v90M987.5 370v90M997.5 370v90M1002.5 370v90M1010.5 370v90" stroke="#0d8f0d" stroke-opacity=".85"/>
            <path d="M751 377v79" stroke="#007a10" stroke-width="2"/><path d="M751 409v47" stroke="#0a7a30" stroke-width="6" stroke-opacity=".6"/>
            <path d="M444 399L505 385.5 751 377 997 385.5 1058 399" fill="none" stroke="#d8c8dd" stroke-dasharray="1 1"/>
            <path d="M475 392L505 398.5Q551 412 597 429T701 452Q732 456 751 456T801 452Q852 446 905 429T997 398.5L1027 392" fill="none" stroke="#0a9a0a"/>
            <path d="M445 444.5L482 440 506 438V429L551 412 597 421.5Q652 433 751 433T905 421.5L951 412 996 429V438L1020 440 1057 444.5" fill="none" stroke="#1010e0"/>
            <path d="M444 405.5L505 404Q535 389 556 390L597 391.5C642 404 652 409 751 409S862 404 905 391.5L946 390Q967 389 997 404L1058 405.5" fill="none" stroke="#ff1010"/>
            <path d="M445 418.5L503 413M1057 418.5L999 413" stroke="#ff0a80"/>
            <g fill="#ff0a0a"><circle cx="442.500" cy="381" r="2"/><circle cx="504" cy="379.500" r="2"/><circle cx="597" cy="376" r="2"/><circle cx="751" cy="371" r="2"/><circle cx="905" cy="376" r="2"/><circle cx="997.500" cy="379.500" r="2"/><circle cx="1059.500" cy="381" r="2"/><circle cx="444" cy="405.500" r="2"/><circle cx="504" cy="404" r="2"/><circle cx="998" cy="404" r="2"/><circle cx="1057" cy="405.500" r="2"/></g>
            <g fill="#ff5a10"><circle cx="556" cy="390" r="2"/><circle cx="597" cy="391.500" r="2"/><circle cx="751" cy="409" r="2"/><circle cx="905" cy="391.500" r="2"/><circle cx="946" cy="390" r="2"/></g>
            <g fill="#1010e0"><circle cx="482" cy="440" r="2"/><circle cx="506" cy="438" r="2"/><circle cx="506" cy="429" r="2"/><circle cx="551" cy="412" r="2"/><circle cx="598" cy="421.500" r="2"/><circle cx="748" cy="433" r="2"/><circle cx="754" cy="433" r="2"/><circle cx="904" cy="421.500" r="2"/><circle cx="950" cy="412" r="2"/><circle cx="996" cy="429" r="2"/><circle cx="996" cy="438" r="2"/><circle cx="1020" cy="440" r="2"/></g>
            <g fill="#0aa00a"><circle cx="505" cy="398.500" r="2"/><circle cx="997" cy="398.500" r="2"/><circle cx="598" cy="429" r="2"/><circle cx="904" cy="429" r="2"/><circle cx="748" cy="456" r="2"/><circle cx="754" cy="456" r="2"/></g>
            <g class="g"><text x="508" y="412">0.281</text><text x="1000" y="412">0.281</text><text x="601" y="443">0.792</text><text x="906" y="443">0.792</text><text x="756" y="469">1.247</text></g>
            <g class="p"><text x="447" y="431">0.466</text><text x="508" y="426">0.496</text><text x="999" y="426">0.497</text><text x="1060" y="431">0.467</text></g>
            <g class="r"><text x="447" y="419">0.278</text><text x="508" y="419">0.385</text><text x="559" y="403">0.182</text><text x="600" y="405">0.230</text><text x="755" y="422">0.560</text><text x="907" y="405">0.230</text><text x="948" y="403">0.183</text><text x="999" y="419">0.385</text><text x="1060" y="419">0.278</text></g>
            <g class="b"><text x="509" y="451">0.854</text><text x="554" y="426">0.510</text><text x="601" y="435">0.669</text><text x="756" y="446">0.913</text><text x="906" y="435">0.669</text><text x="953" y="426">0.510</text><text x="998" y="451">0.855</text></g>
          </svg>
          <div class="info"><p>Barres <em>|</em> Contrôle de section <em>|</em> max&nbsp; : 0.560 <em>|</em> min&nbsp; : 0.182</p><p>Barres <em>|</em> Stabilité <em>|</em> max&nbsp; : 0.913 <em>|</em> min&nbsp; : 0.510</p><p>Barres <em>|</em> État limite de service <em>|</em> max&nbsp; : 1.247 <em>|</em> min&nbsp; : 0.012</p><p>Barres <em>|</em> max η : 1.247 <em>|</em> min η : 0.012</p></div>
          <div class="cube"><i></i><i></i><i></i><i></i><i>-Y</i><i></i><i></i><i></i><i></i></div>
        </section>

        <aside class="control">
          <h2>Panneau de contrôle <button title="Détacher"><svg class="s"><use href="#i-float"/></svg></button><button title="Fermer"><svg class="s"><use href="#i-x"/></svg></button></h2>
          <div class="box">
            <p class="cap">Vérification de l'acier <em>|</em> Vérifications par barres</p>
            <dl>
              <dt>ST4100</dt><dd class="blue"></dd>
              <dt>SE1100</dt><dd class="green"></dd>
              <dt>SP6500</dt><dd class="red"></dd>
              <dt>SP6200</dt><dd class="pink"></dd>
            </dl>
            <div class="foot"><button title="Options"><svg class="ic"><use href="#i-panel"/></svg></button></div>
          </div>
          <div class="tabs">
            <button class="cur" title="Légende"><svg class="ic"><use href="#i-list"/></svg></button>
            <button title="Facteurs"><svg class="ic"><use href="#i-bal"/></svg></button>
            <button title="Filtre"><svg class="ic"><use href="#i-fac"/></svg></button>
          </div>
        </aside>
      </div>

      <section class="results">
        <h2><span>Ratio de vérification sur les barres par ensemble de barres | Vérification de l'acier | EN 1993 | DIN | 2016-04</span> <button title="Détacher"><svg class="s"><use href="#i-float"/></svg></button><button title="Fermer"><svg class="s"><use href="#i-x"/></svg></button></h2>
        <nav class="menu"><button>Accéder à</button><button>Modifier</button><button>Sélection</button><button>Affichage</button><button>Paramètres</button></nav>
        <div class="toolbar">
          <div class="combo combo-mod"><svg class="ic"><use href="#i-steel"/></svg><select aria-label="Module"><option>Vérification de l'acier</option></select><svg class="s"><use href="#i-chev"/></svg></div>
          <button class="step"><svg class="s"><use href="#i-prev"/></svg></button>
          <button class="step"><svg class="s"><use href="#i-next"/></svg></button>
          <i class="sep"></i><i class="full"></i>
          <div class="combo combo-tab"><svg class="ic"><use href="#i-mem"/></svg><select aria-label="Tableau"><option>Ratios de vérification sur les barres</option></select><svg class="s"><use href="#i-chev"/></svg></div>
          <button class="step"><svg class="s"><use href="#i-prev"/></svg></button>
          <button class="step"><svg class="s"><use href="#i-next"/></svg></button>
          <i class="sep"></i>
          <button class="on"><svg class="ic"><use href="#i-synl"/></svg></button>
          <button class="on"><svg class="ic"><use href="#i-synr"/></svg></button>
          <i class="full"></i>
          <button class="on"><svg class="ic"><use href="#i-reye"/></svg></button>
          <button class="on"><svg class="ic"><use href="#i-rx"/></svg></button>
          <i class="sep"></i>
          <button><svg class="ic"><use href="#i-tab"/></svg></button>
          <button class="on"><svg class="ic"><use href="#i-ytab"/></svg></button>
          <button><svg class="ic"><use href="#i-ytab"/></svg></button>
          <i class="sep"></i>
          <button class="on"><svg class="ic"><use href="#i-bars"/></svg></button>
          <i class="sep"></i>
          <button><svg class="ic"><use href="#i-xls"/></svg></button>
          <i class="sep"></i>
          <button><svg class="ic"><use href="#i-filt"/></svg></button>
          <button><svg class="ic"><use href="#i-dec"/></svg></button>
          <i class="sep"></i>
          <button><svg class="ic"><use href="#i-curx"/></svg></button>
          <i class="sep"></i>
          <button><svg class="ic"><use href="#i-help"/></svg></button>
          <i class="full"></i>
          <button><svg class="ic"><use href="#i-look"/></svg></button>
          <button><svg class="ic"><use href="#i-iramp"/></svg></button>
          <button class="more last">»</button>
        </div>

        <div class="sheet">
          <div class="grid">
            <table>
              <colgroup><col class="c60"><col class="c65"><col class="c70"><col class="c60"><col class="c60"><col class="c65"><col class="c108"><col class="c100"><col class="c800"></colgroup>
              <thead>
                <tr class="strip"><td></td><td></td><td></td><td></td><td></td><td></td><td></td><td></td><td></td></tr>
                <tr>
                  <th><div>Ensemble<br>de barres<br>n°</div></th><th><div>Barre<br>n°</div></th><th><div>Position<br>x [m]</div></th><th><div>Point de<br>contrainte</div></th><th><div>Situation<br>de projet</div></th><th class="l"><div>Chargement<br>n°</div></th><th><div>Ratio de<br>vérification η [--]</div></th><th><div>Type de<br>vérification</div></th><th><div><br>Description</div></th>
                </tr>
              </thead>
              <tbody>
                <tr class="group"><th>5</th><td colspan="8">Upper chord</td></tr>
                <tr><th class="cur"></th><td>36</td><td class="pos">1.001<i>⅓</i></td><td></td><td>SP1</td><td>CO12</td><td class="ratio"><div><b><u style="width:0%"></u></b>0.007<svg class="s"><use href="#i-ok"/></svg></div></td><td class="mono">SP1100.00</td><td class="d">Contrôle de section <em>|</em> Traction selon 6.2.3</td></tr>
                <tr><th></th><td>39</td><td class="pos">0.334<i></i></td><td></td><td>SP1</td><td>CO25</td><td class="ratio"><div><b><u style="width:0%"></u></b>0.012<svg class="s"><use href="#i-ok"/></svg></div></td><td class="mono">SP1200.00</td><td class="d">Contrôle de section <em>|</em> Compression selon 6.2.4</td></tr>
                <tr><th></th><td></td><td class="pos">3.002<svg><use href="#i-dn"/></svg></td><td></td><td>SP1</td><td>CO26</td><td class="ratio"><div><b><u style="width:11%"></u></b>0.111<svg class="s"><use href="#i-ok"/></svg></div></td><td class="mono">SP3100.02</td><td class="d">Contrôle de section <em>|</em> Cisaillement en direction de l'axe z selon 6.2.6(2) <em>|</em> Calcul plastique</td></tr>
                <tr><th></th><td>40</td><td class="pos">0.000<svg><use href="#i-up"/></svg></td><td>9</td><td>SP1</td><td>CO26</td><td class="ratio"><div><b><u style="width:15%"></u></b>0.146<svg class="s"><use href="#i-ok"/></svg></div></td><td class="mono">SP3400.02</td><td class="d">Contrôle de section <em>|</em> Cisaillement selon 6.2.6(4) <em>|</em> Calcul élastique</td></tr>
                <tr><th></th><td>37</td><td class="pos">5.003<svg><use href="#i-dn"/></svg></td><td></td><td>SP1</td><td>CO9</td><td class="ratio"><div><b><u style="width:21%"></u></b>0.205<svg class="s"><use href="#i-ok"/></svg></div></td><td class="mono">SP4100.03</td><td class="d">Contrôle de section <em>|</em> Flexion autour de l'axe y selon 6.2.5 <em>|</em> Calcul plastique</td></tr>
                <tr><th></th><td>40</td><td class="pos">0.000<svg><use href="#i-up"/></svg></td><td>11</td><td>SP1</td><td>CO26</td><td class="ratio"><div><b><u style="width:50%"></u></b>0.497<svg class="s"><use href="#i-ok"/></svg></div></td><td class="mono">SP6200.00</td><td class="d">Contrôle de section <em>|</em> Flexion, effort normal et cisaillement selon 6.2.9.2, 6.2.9.3, 6.2.10</td></tr>
                <tr><th></th><td>37</td><td class="pos">5.003<svg><use href="#i-dn"/></svg></td><td></td><td>SP1</td><td>CO30</td><td class="ratio"><div><b><u style="width:56%"></u></b>0.560<svg class="s"><use href="#i-ok"/></svg></div></td><td class="mono">SP6500.02</td><td class="d">Contrôle de section <em>|</em> Flexion autour de l'axe y, effort normal et cisaillement selon 6.2.9</td></tr>
                <tr><th></th><td></td><td></td><td></td><td>SP1</td><td>CO30</td><td class="ratio"><div><b><u style="width:91%"></u></b>0.913<svg class="s"><use href="#i-ok"/></svg></div></td><td class="mono">ST4100.03</td><td class="d">Stabilité <em>|</em> Flexion et compression selon 6.3.4 <em>|</em> Méthode générale - Johannes Naumes</td></tr>
              </tbody>
            </table>
          </div>
          <div class="vbar"><svg class="s" viewBox="0 0 10 10"><path d="M1 7l4-4 4 4"/></svg><i></i><svg class="s" viewBox="0 0 10 10"><path d="M1 3l4 4 4-4"/></svg></div>
          <div class="hbar"><svg class="s" viewBox="0 0 10 10"><path d="M7 1L3 5l4 4"/></svg><i></i><svg class="s" viewBox="0 0 10 10"><path d="M3 1l4 4-4 4"/></svg></div>
        </div>

        <div class="sheets">
          <button class="nb" title="Premier"><svg viewBox="0 0 10 10"><path d="M1 1h2v8H1zM9 1v8L4 5z"/></svg></button>
          <button class="nb" title="Précédent"><svg><use href="#i-prev"/></svg></button>
          <span>5 sur 7</span>
          <button class="nb" title="Suivant"><svg><use href="#i-next"/></svg></button>
          <button class="nb" title="Dernier"><svg viewBox="0 0 10 10"><path d="M7 1h2v8H7zM1 1v8l5-4z"/></svg></button>
          <button class="tab cut">chargement</button>
          <button class="tab">Ratios de vérification par matériau</button>
          <button class="tab">Ratios de vérification par section</button>
          <button class="tab cur">Ratios de vérification par ensemble de barres</button>
          <button class="tab">Ratios de vérification par barre</button>
          <div class="scroll">
            <button title="Gauche"><svg viewBox="0 0 10 12"><path d="M8 0v12L2 6z"/></svg></button>
            <button title="Droite"><svg viewBox="0 0 10 12"><path d="M2 0v12l6-6z"/></svg></button>
          </div>
        </div>
      </section>
    </div>
  </main>

  <footer class="status">
    <button class="in">SAISIE</button><button>GRILLE</button><button>GLIGNES</button><button class="in">SAISIE D'OB</button><span class="w104">Mode de visibilité</span><span class="w106 ln"></span><span class="w156 ln">SC: Global XYZ</span><span class="w66 ln">Plan : XY</span><span class="w76 ln"></span><span class="w76 ln"></span><span class="w76 ln"></span><span class="ln end"><svg viewBox="0 0 10 10"><path d="M8 2v8M5 5v5M2 8v2" stroke="#aaa" stroke-width="2" stroke-dasharray="2 1"/></svg></span>
  </footer>
</div>
</body>
</html>
```

FILE: styles.css
```css
* { box-sizing: border-box; }
html, body { height: 100%; margin: 0; }
body, button, select, input {
  font-family: "Noto Sans", "Open Sans", sans-serif;
  font-size: 11px;
  color: #000;
}
button { border: 0; padding: 0; background: none; flex: none; }
ul, dl, dd, p { margin: 0; padding: 0; list-style: none; }
svg { flex: none; display: block; }
/* the thin separator bar between captions */
em { font-family: Roboto, sans-serif; font-style: normal; line-height: 1; }
.defs { display: none; }
.ic { width: 20px; height: 20px; }
.s { width: 10px; height: 10px; }
.tiny { font: bold 8px "Liberation Sans", sans-serif; fill: #222; }
.big { font-size: 9px; }
.six { font: bold 12px "Liberation Sans", sans-serif; fill: #ffc928; }
.dec { font: bold 9px "Liberation Sans", sans-serif; }

.window {
  display: flex; flex-direction: column;
  height: 100%;
  background: #f7f7f7;
  border: 1px solid #0063b1;
  overflow: hidden;
}

/* title bar and menus */
.title {
  display: flex; align-items: center; gap: 5px;
  height: 30px; padding-left: 5px;
  background: #0063b1; color: #fff;
}
.winbtns { display: flex; margin-left: auto; }
.winbtns button { width: 46px; height: 30px; }
.winbtns svg { width: 12px; height: 12px; margin: auto; fill: none; stroke: #fff; }
.menu { display: flex; align-items: center; gap: 16px; height: 20px; padding-left: 8px; flex: none; }
.main-menu { padding-left: 0; border-bottom: 1px solid #e2e2e2; }
.logo { width: 16px; height: 12px; margin-right: -8px; }
.mdi { display: flex; gap: 9px; margin: 0 4px 0 auto; }

/* toolbars */
.toolbar {
  display: flex; align-items: center;
  height: 28px; flex: none;
  border-bottom: 1px solid #e2e2e2;
}
.toolbar button { width: 26px; height: 24px; }
.toolbar button svg, .step svg { margin: auto; }
.toolbar .on { background: #cce4f7; box-shadow: inset 0 0 0 1px #92c4ea; }
.toolbar .off svg { filter: grayscale(1); opacity: .6; }
.toolbar .drop { width: 12px; }
.drop svg { width: 8px; height: 5px; }
.toolbar .more { width: 14px; font-size: 14px; color: #444; }
.toolbar .last { margin-left: auto; }
.grip { width: 9px; height: 20px; border-left: 2px dotted #bbb; margin-left: 4px; margin-right: -4px; flex: none; }
.sep { width: 7px; height: 18px; border-left: 1px solid #d0d0d0; margin-left: 3px; margin-right: -3px; flex: none; }
.brk { width: 12px; height: 28px; border-left: 1px solid #dcdcdc; flex: none; padding: 4px 0 4px 5px; }
.brk::after { content: ""; display: block; height: 20px; border-left: 2px dotted #bbb; }
.full { width: 3px; height: 28px; border-left: 1px solid #dcdcdc; flex: none; }
.combo { display: flex; align-items: center; height: 21px; padding: 0 4px 0 3px; background: #e8e8f3; }
.combo select { appearance: none; border: 0; padding: 0; background: none; flex: 1; min-width: 0; margin-left: 2px; }
.combo.dis { background: #e6e6e6; }
.combo.dis select { color: #777; opacity: 1; }
.gray { filter: grayscale(1); opacity: .7; }
.combo-load { width: 269px; }
.combo-cs { width: 132px; }
.combo .cyan { margin-right: 2px; }
.combo-mod { width: 201px; margin-left: 1px; }
.combo-tab { width: 271px; }
.combo-load select { margin-left: 28px; }
.chip { width: 30px; background: #000; color: #fff; text-align: center; line-height: 13px; margin-left: 1px; }
.sw { width: 11px; height: 11px; margin: 0 5px 0 3px; background: #c0c0c0; }
.ci { width: 28px; }
.cyan { background: #ccffff; }
.toolbar .step, .step { width: 15px; height: 21px; margin-left: 1px; background: #e8e8f3; }
.toolbar .step.dis, .step.dis { background: #d2d2d2; fill: #444; }

/* panels */
main { display: flex; flex: 1; min-height: 0; }
h2 {
  display: flex; align-items: center; gap: 11px;
  height: 21px; margin: 0; padding: 0 7px 0 5px; flex: none;
  background: #d8e5f2; color: #333;
  font-size: 11px; font-weight: 700;
  white-space: nowrap;
}
h2 button:first-of-type { margin-left: auto; }
.box { border: 1px solid #c5c5d4; }
.navigator { width: 368px; display: flex; flex-direction: column; }
.navigator .box { display: flex; flex-direction: column; flex: 1; margin: 1px 0 0 1px; }
.pick { display: flex; padding: 3px 2px 10px 3px; }
.pick .combo { flex: 1; }
.tabs { display: flex; flex: none; }
.tabs button { width: 38px; height: 24px; background: #ededed; border: 1px solid #c5c5d4; border-left: 0; }
.tabs button svg { margin: auto; }
.tabs .cur { background: #fff; border-top-color: #fff; height: 26px; }

/* tree */
.tree { flex: 1; background: #fff; padding-left: 1px; overflow: hidden; }
.tree ul { padding-left: 20px; }
.tree .mark { background: #fff45c; margin-left: 18px; padding-left: 2px; }
.tree label { display: flex; align-items: center; height: 18px; white-space: nowrap; }
.tree label > i { width: 18px; height: 6px; margin-right: 3px; flex: none; }
.tree label > i::before { content: ""; display: block; width: 6px; height: 6px; margin: -3px 0 0 6px; transform: rotate(45deg); }
.tree .open::before { border: solid #444; border-width: 0 2px 2px 0; }
.tree label > .shut::before { border: solid #999; border-width: 2px 2px 0 0; margin: 0 0 0 4px; }
.tree input { appearance: none; width: 13px; height: 13px; margin: 0 2px 2px 0; border: 1px solid #333; flex: none; }
.tree input[type=radio] { border-radius: 50%; }
.tree input[type=checkbox]:checked::before { content: ""; display: block; width: 8px; height: 4px; margin: 2px 0 0 2px; border: solid #333; border-width: 0 0 1px 1px; transform: rotate(-45deg); }
.tree input[type=radio]:checked::before { content: ""; display: block; width: 7px; height: 7px; margin: 2px; border-radius: 50%; background: #333; }
.tree .part { background: #cce4f7; border-color: #0063b1; }
.tree span { flex: 1; min-width: 0; height: 18px; line-height: 18px; padding-left: 3px; overflow: hidden; }
.tree span svg, .tree span b { display: inline-block; vertical-align: middle; }
.tree span svg { width: 17px; height: 17px; margin: -5px 4px -1px 0; }
.tree span b { width: 16px; height: 1px; margin: 0 5px 2px 0; background: #777; }
.tree .sel span { background: #cddc58; }
.tree .mark b { background: #77732f; }
.tree .mark .red, .tree .mark .pink { background: #ff1030; }
.tree .mark .blue { background: #0000a0; }
.tree .mark .green { background: #00aa00; }
.options { flex: none; height: 172px; margin-top: 5px; }

/* model view */
.center { display: flex; flex-direction: column; flex: 1; min-width: 0; margin-left: 4px; }
.upper { display: flex; flex: 1; min-height: 0; }
.view { position: relative; display: flex; flex-direction: column; justify-content: space-between; flex: 1; min-width: 0; background: #fff; padding: 4px 3px 3px 5px; }
.info { min-height: 64px; }
.info p { line-height: 17px; }
.model { width: 660px; height: 130px; margin: 0 auto; overflow: visible; }
.model text { font-size: 11px; text-anchor: middle; }
.model .r { fill: #f00; }
.model .p { fill: #ff0a80; }
.model .b { fill: #0000e0; }
.model .g { fill: #00a000; }
.cube {
  position: absolute; top: 33px; right: 33px;
  display: grid; grid-template: 18px 34px 18px / 18px 34px 18px;
}
.cube i { border: 1px solid #777; outline: 1px solid #777; outline-offset: -2px; font: bold 15px/32px "Noto Sans", sans-serif; color: #3c3; text-align: center; }

/* control panel */
.control { width: 259px; margin-left: 5px; display: flex; flex-direction: column; }
.control .box { flex: 1; display: flex; flex-direction: column; margin-top: 1px; }
.cap { padding: 0 9px; height: 27px; line-height: 22px; background: #fff; white-space: nowrap; }
.control dl { display: grid; grid-template-columns: 120px 41px; column-gap: 12px; row-gap: 2px; margin-top: 13px; line-height: 24px; }
.control dt { text-align: right; }
dd.blue { background: #00f; }
dd.green { background: #0a0; }
dd.red { background: #f00; }
dd.pink { background: #ff0084; }
.foot { margin-top: auto; height: 33px; background: #fff; display: flex; justify-content: flex-end; padding: 6px; }
.foot button { width: 25px; height: 21px; background: #cce4f7; }
.foot svg { margin: auto; }
.control .tabs { height: 25px; }
.control .tabs button { height: 23px; border-top: 0; }
.control .tabs .cur { height: 25px; border-left: 1px solid #c5c5d4; }

/* results table */
.results { display: flex; flex-direction: column; height: 296px; margin-top: 4px; flex: none; }
.results h2 { height: 22px; padding-left: 6px; }
.sheet { display: grid; grid-template: 1fr 16px / 1fr 16px; height: 204px; border: 1px solid #c5c5d4; }
.grid { overflow: hidden; min-width: 0; background: #fff; }
table { table-layout: fixed; width: 1388px; border-collapse: separate; border-spacing: 0; }
.c60 { width: 60px; } .c65 { width: 65px; } .c70 { width: 70px; }
.c100 { width: 100px; } .c108 { width: 108px; } .c800 { width: 800px; }
th, td { padding: 0; border: solid #d9d9d9; border-width: 0 1px 1px 0; font-weight: normal; text-align: center; white-space: nowrap; overflow: hidden; height: 16px; line-height: 15px; }
.strip td { height: 9px; background: #e1e1e1; border-color: #f7f7f7; }
thead th { background: #f0f0f0; border-right-color: #ccc; }
thead th div { display: flex; align-items: center; justify-content: center; height: 32px; line-height: 13px; }
thead .l div { justify-content: flex-start; text-align: left; padding-left: 4px; overflow: hidden; }
tbody th { background: #e1e1e1; border-color: #e1e1e1; }
tbody th.cur { background: #c6c6c6; }
.group td { background: #e8effb; text-align: left; padding-left: 4px; }
.pos { text-align: right; padding-right: 4px; }
.pos i { display: inline-block; width: 12px; font-size: 10px; font-style: normal; line-height: 12px; text-align: right; color: #777; }
.pos svg { display: inline-block; width: 8px; height: 8px; margin-left: 4px; vertical-align: -1px; }
.ratio div { display: flex; align-items: center; justify-content: flex-end; height: 15px; padding: 0 3px 0 5px; }
.ratio b { width: 43px; height: 11px; margin-right: auto; border: solid #bbb; border-width: 0 1px; display: flex; }
.ratio u { background: #c9f5c9; }
.ratio .s { margin-left: 2px; }
.mono { font-family: "Liberation Mono", monospace; font-size: 12px; text-align: right; padding-right: 4px; }
.d { text-align: left; padding-left: 4px; }
.vbar { display: flex; flex-direction: column; align-items: center; justify-content: space-between; padding: 4px 0; background: #f0f0f0; }
.vbar i { width: 15px; height: 18px; margin-top: 38px; background: #cdcdcd; }
.hbar { display: flex; align-items: center; justify-content: space-between; padding: 0 3px; background: #f0f0f0; }
.hbar i { width: 243px; height: 15px; margin: 0 auto 0 4px; background: #cdcdcd; }
.vbar path, .hbar path { fill: none; stroke: #444; stroke-width: 2; }

/* sheet tabs */
.sheets { display: flex; align-items: flex-start; height: 23px; overflow: hidden; }
.sheets .nb { width: 17px; height: 22px; }
.sheets .nb svg { width: 10px; height: 10px; margin: auto; fill: #222; }
.sheets span { padding: 0 14px; line-height: 22px; white-space: nowrap; }
.tab { height: 21px; padding: 0 7px; background: #ededed; border: 1px solid #c5c5d4; border-top: 0; border-left: 0; white-space: nowrap; }
.tab.cut { width: 68px; display: flex; justify-content: flex-end; align-items: center; overflow: hidden; }
.tab.cur { height: 22px; background: #fff; }
.scroll { display: flex; gap: 5px; height: 20px; margin: 0 3px 0 auto; }
.scroll svg { width: 10px; height: 12px; }

/* status bar */
.status { display: flex; justify-content: flex-end; align-items: center; height: 24px; flex: none; }
.status button { height: 19px; padding: 0 4px; }
.status .in { background: #efefef; border: 1px solid #bbb; border-right-color: #fff; border-bottom-color: #fff; }
.status span { height: 19px; line-height: 19px; padding-left: 4px; }
.ln { border-left: 1px solid #d0d0d0; }
.w104 { width: 104px; } .w106 { width: 106px; } .w156 { width: 156px; } .w66 { width: 66px; } .w76 { width: 76px; }
.end { width: 19px; }
.end svg { width: 10px; height: 10px; margin-top: 8px; }
```
